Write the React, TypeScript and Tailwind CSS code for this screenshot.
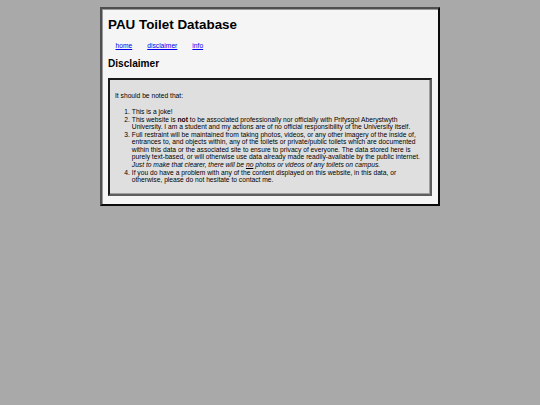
export default function App() {
  return (
    <div className="min-h-[405px] bg-[#a9a9a9] pt-[7px] font-['Liberation_Sans',Arial,sans-serif] text-black">
      <div className="mx-auto w-[340px] border-2 border-t-[#4f4f4f] border-l-[#4f4f4f] border-r-[#0a0a0a] border-b-[#0a0a0a] bg-[#f5f5f5] px-[6px] pb-[8px] shadow-[inset_1px_1px_0_#9a9a9a]">
        <h1 className="mt-[8px] text-[13.4px] font-bold leading-[15px]">PAU Toilet Database</h1>
        <nav className="mt-[10px] flex text-[6.7px] leading-[7.7px]">
          <a href="#" className="px-[7.5px] text-[#0000ee] underline">home</a>
          <a href="#" className="px-[7.5px] text-[#0000ee] underline">disclaimer</a>
          <a href="#" className="px-[7.5px] text-[#0000ee] underline">info</a>
        </nav>
        <h2 className="mt-[8.6px] text-[10.1px] font-bold leading-[11.6px]">Disclaimer</h2>
        <div className="mt-[8px] border-2 border-t-[#1a1a1a] border-l-[#1a1a1a] border-r-[#5e5e5e] border-b-[#5e5e5e] bg-[#dfdfdf] px-[5px] pt-[5px] pb-[4px] text-[6.7px] leading-[7.55px] shadow-[inset_-1px_-1px_0_#a0a0a0]">
          <p className="mt-[6.7px] mb-[9px]">It should be noted that:</p>
          <ol className="mb-[6.7px] list-decimal pl-[16.8px]">
            <li>This is a joke!</li>
            <li>
              This website is <strong>not</strong> to be associated professionally nor officially with Prifysgol Aberystwyth
              <br />
              University. I am a student and my actions are of no official responsibility of the University itself.
            </li>
            <li>
              Full restraint will be maintained from taking photos, videos, or any other imagery of the inside of,
              <br />
              entrances to, and objects within, any of the toilets or private/public toilets which are documented
              <br />
              within this data or the associated site to ensure to privacy of everyone. The data stored here is
              <br />
              purely text-based, or will otherwise use data already made readily-available by the public internet.
              <br />
              <em>
                Just to make that clearer, there will be <u>no</u> photos or videos of <em>any</em> toilets on campus.
              </em>
            </li>
            <li>
              If you do have a problem with any of the content displayed on this website, in this data, or
              <br />
              otherwise, please do not hesitate to contact me.
            </li>
          </ol>
        </div>
      </div>
    </div>
  );
}
